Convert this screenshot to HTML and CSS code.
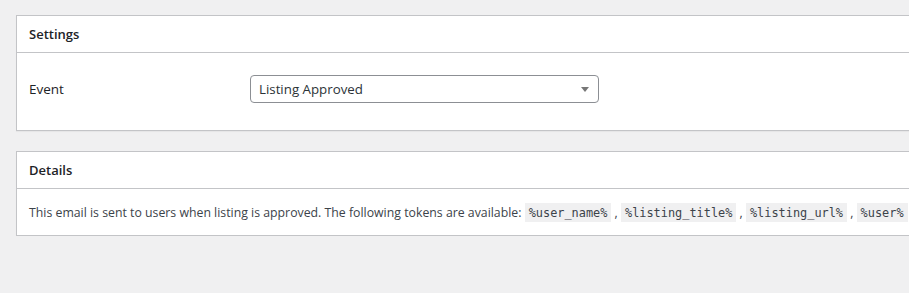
FILE: index.html
```html
<!DOCTYPE html>
<html lang="en">

<head>
    <meta charset="UTF-8">
    <title>Notification Settings</title>
    <link rel="stylesheet" href="styles.css">
</head>

<body>
    <div class="wrap">
        <!-- Settings box -->
        <div class="postbox">
            <h2 class="postbox-header">Settings</h2>
            <div class="inside settings">
                <div class="form-row">
                    <label class="form-label" for="event">Event</label>
                    <div class="form-field">
                        <div class="select">
                            <span>Listing Approved</span>
                            <span class="arrow"></span>
                        </div>
                    </div>
                </div>
            </div>
        </div>

        <!-- Details box -->
        <div class="postbox">
            <h2 class="postbox-header">Details</h2>
            <div class="inside details">
                <p>This email is sent to users when listing is approved. The following tokens are available:
                    <code>%user_name%</code> , <code>%listing_title%</code> , <code>%listing_url%</code> , <code>%user%</code></p>
            </div>
        </div>
    </div>
</body>

</html>
```

FILE: styles.css
```css
* {
    margin: 0;
    padding: 0;
    box-sizing: border-box;
}

body {
    font-family: 'Open Sans', 'Noto Sans', sans-serif;
    font-size: 12.3px;
    color: #3c434a;
    background-color: #f0f0f1;
    overflow: hidden;
}

.wrap {
    padding: 15px 0 0 16px;
    width: 1100px;
    display: flex;
    flex-direction: column;
    gap: 20px;
}

/* Postbox */
.postbox {
    background-color: #fff;
    border: 1px solid #c3c4c7;
    box-shadow: 0 1px 1px rgba(0, 0, 0, 0.04);
}

.postbox-header {
    height: 37px;
    display: flex;
    align-items: center;
    padding: 0 12px;
    font-size: 13px;
    font-weight: 600;
    color: #1d2327;
    border-bottom: 1px solid #c3c4c7;
}

.inside {
    padding: 0 12px;
}

.settings {
    height: 77px;
    padding-top: 22px;
}

.form-row {
    display: flex;
    align-items: center;
}

.form-label {
    width: 221px;
    font-size: 13.5px;
    color: #1d2327;
}

.select {
    width: 349px;
    height: 28px;
    border: 1px solid #8c8f94;
    border-radius: 4px;
    display: flex;
    align-items: center;
    justify-content: space-between;
    padding: 0 9px 0 8px;
    font-size: 13.3px;
    color: #2c3338;
}

.arrow {
    width: 0;
    height: 0;
    border-left: 4px solid transparent;
    border-right: 4px solid transparent;
    border-top: 5px solid #777;
}

.details {
    height: 46px;
    display: flex;
    align-items: center;
}

.details p {
    white-space: nowrap;
}

code {
    font-family: 'DejaVu Sans Mono', 'Liberation Mono', monospace;
    font-size: 11.9px;
    background-color: #f0f0f1;
    padding: 3px 4px 2px;
    color: #3c434a;
}
```
